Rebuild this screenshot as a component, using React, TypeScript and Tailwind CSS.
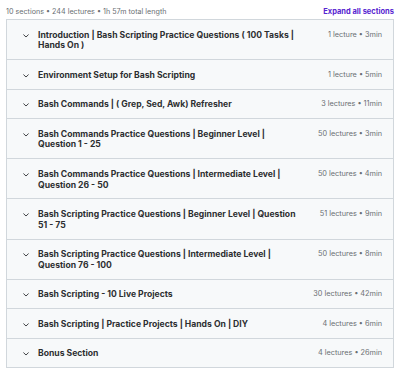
import React from "react";

const sections: { title: string[]; meta: string }[] = [
  { title: ["Introduction | Bash Scripting Practice Questions ( 100 Tasks |", "Hands On )"], meta: "1 lecture • 3min" },
  { title: ["Environment Setup for Bash Scripting"], meta: "1 lecture • 5min" },
  { title: ["Bash Commands | ( Grep, Sed, Awk) Refresher"], meta: "3 lectures • 11min" },
  { title: ["Bash Commands Practice Questions | Beginner Level |", "Question 1 - 25"], meta: "50 lectures • 3min" },
  { title: ["Bash Commands Practice Questions | Intermediate Level |", "Question 26 - 50"], meta: "50 lectures • 4min" },
  { title: ["Bash Scripting Practice Questions | Beginner Level | Question", "51 - 75"], meta: "51 lectures • 9min" },
  { title: ["Bash Scripting Practice Questions | Intermediate Level |", "Question 76 - 100"], meta: "50 lectures • 8min" },
  { title: ["Bash Scripting - 10 Live Projects"], meta: "30 lectures • 42min" },
  { title: ["Bash Scripting | Practice Projects | Hands On | DIY"], meta: "4 lectures • 6min" },
  { title: ["Bonus Section"], meta: "4 lectures • 26min" },
];

function Chevron() {
  return (
    <svg width="6" height="4" viewBox="0 0 6 4" className="shrink-0 mt-[4px]" fill="none">
      <path d="M0.7 0.8 L3 3 L5.3 0.8" stroke="#2d2f31" strokeWidth="0.9" strokeLinecap="round" strokeLinejoin="round" />
    </svg>
  );
}

export default function App() {
  return (
    <div
      className="w-[400px] h-[374px] bg-white px-[6px] pt-[5px]"
      style={{ fontFamily: "Inter, 'Noto Sans', sans-serif" }}
    >
      <div className="flex items-center justify-between h-[14px]">
        <span className="text-[7.2px] text-[#6a6f73]">10 sections • 244 lectures • 1h 57m total length</span>
        <span className="text-[7.5px] font-bold text-[#5624d0]">Expand all sections</span>
      </div>
      <div className="border border-[#d1d7dc]">
        {sections.map((s, i) => (
          <div
            key={i}
            className={
              "flex items-start bg-[#f7f9fa] pl-[16px] pr-[11px] pt-[9.6px] pb-[8px] " +
              (i > 0 ? "border-t border-[#d1d7dc]" : "")
            }
          >
            <Chevron />
            <div className="flex-1 ml-[9px] text-[8.6px] leading-[10.8px] font-bold text-[#2d2f31]">
              {s.title.map((line, j) => (
                <div key={j} className="whitespace-nowrap">{line}</div>
              ))}
            </div>
            <div className="ml-[12px] text-[7.3px] leading-[10.8px] text-[#6a6f73] whitespace-nowrap">
              {s.meta}
            </div>
          </div>
        ))}
      </div>
    </div>
  );
}
